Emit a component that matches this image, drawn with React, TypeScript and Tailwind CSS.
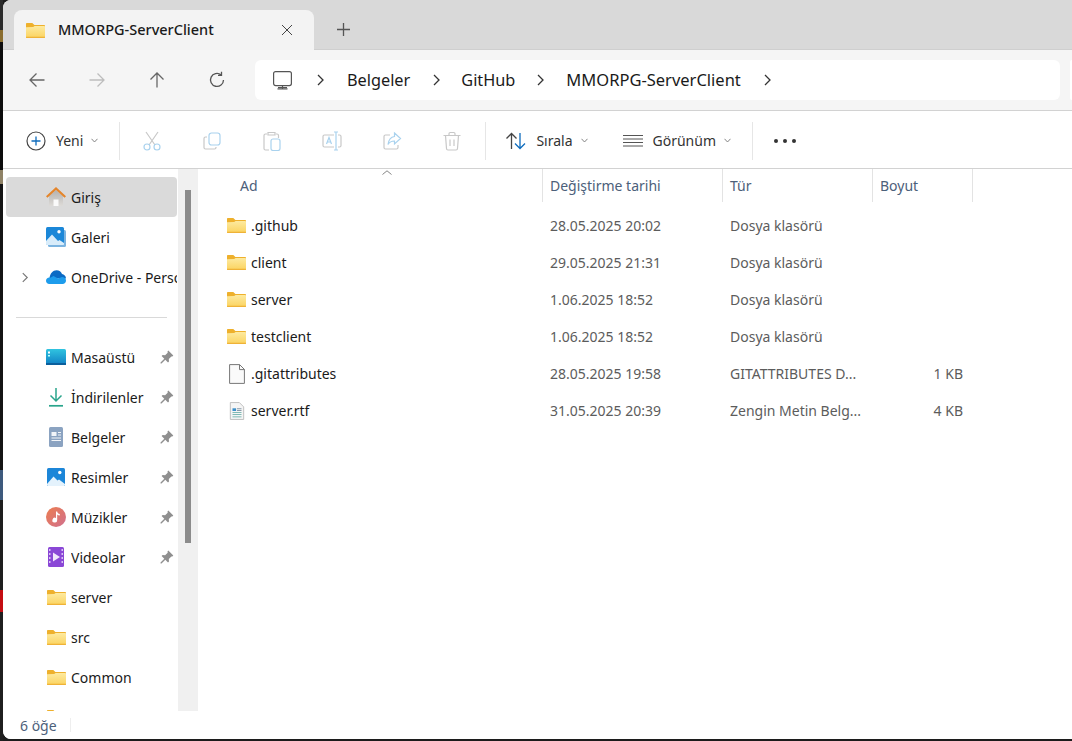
import type { ReactNode } from 'react'

const FONT = 'font-["Noto_Sans","Open_Sans",sans-serif]'

// --- Icons ------------------------------------------------------------------

function FolderIcon({ className = 'w-[19px] h-[15px]' }: { className?: string }) {
  return (
    <svg viewBox="0 0 19 15" className={className}>
      <defs>
        <linearGradient id="folderBody" x1="0" y1="0" x2="0" y2="1">
          <stop offset="0" stopColor="#fdeaa0" />
          <stop offset="1" stopColor="#fbd35f" />
        </linearGradient>
      </defs>
      <path d="M0 1C0 .4.4 0 1 0h4.800c.4 0 .7.1 1 .4L8.400 2H18c.6 0 1 .4 1 1v11c0 .6-.4 1-1 1H1c-.6 0-1-.4-1-1z" fill="#eeb02c" />
      <path d="M0 4.300l7.200-.2L8.600 3H18c.6 0 1 .4 1 1v10c0 .6-.4 1-1 1H1c-.6 0-1-.4-1-1z" fill="url(#folderBody)" />
      <path d="M0 13.800h19v.2c0 .6-.4 1-1 1H1c-.6 0-1-.4-1-1z" fill="#efb237" />
    </svg>
  )
}

function Chevron({ className = 'w-[9px] h-[12px]', color = '#333' }: { className?: string; color?: string }) {
  return (
    <svg viewBox="0 0 9 12" className={className} fill="none" stroke={color} strokeWidth="1.300">
      <path d="M2 1l5 5-5 5" />
    </svg>
  )
}

function SmallDown() {
  return (
    <svg viewBox="0 0 7 5" className="w-[7px] h-[5px]" fill="none" stroke="#777" strokeWidth="0.900">
      <path d="M.5 .8L3.500 4 6.500 .8" />
    </svg>
  )
}

function NavArrow({ d, color }: { d: string; color: string }) {
  return (
    <svg viewBox="0 0 18 18" className="w-[18px] h-[18px]" fill="none" stroke={color} strokeWidth="1.300">
      <path d={d} />
    </svg>
  )
}

function Pin() {
  return (
    <svg viewBox="0 0 14 14" className="w-[14px] h-[14px]" fill="#8f8f8f">
      <path d="M8.300.6l5 5-1 1-.9-.2-2.600 2.600.2 2.500-1 1L5.300 9.800 1.500 13.500.6 13.400l-.1-.8 3.800-3.800-2.700-2.700 1-1 2.500.2L7.700 2.700 7.500 1.600z" />
    </svg>
  )
}

function HomeIcon() {
  return (
    <svg viewBox="0 0 20 20" className="w-[20px] h-[20px]">
      <defs>
        <linearGradient id="homeBody" x1="0" y1="0" x2="0" y2="1">
          <stop offset="0" stopColor="#b4b1ad" />
          <stop offset="1" stopColor="#dddbd8" />
        </linearGradient>
      </defs>
      <path d="M3 9L10 3l7 6v10H3z" fill="url(#homeBody)" />
      <path d="M7.500 19v-6.500h5V19z" fill="#fafafa" />
      <path d="M.7 10L10 1.500 19.300 10" fill="none" stroke="#e4852b" strokeWidth="2.200" />
    </svg>
  )
}

function GalleryIcon() {
  return (
    <svg viewBox="0 0 20 20" className="w-[20px] h-[20px]">
      <rect x="2" y="3" width="18" height="17" rx="1.500" fill="#7cb4e0" />
      <rect width="18" height="18" rx="1.500" fill="#1b87d8" />
      <circle cx="13" cy="4.800" r="1.700" fill="#fff" />
      <path d="M0 14l6-6.500 6 6.500 1.500-1 4.500 3v1.500c0 .3-.2.500-.5.500H.5c-.3 0-.5-.2-.5-.5z" fill="#d8ecfa" />
    </svg>
  )
}

function CloudIcon() {
  return (
    <svg viewBox="0 0 20 14" className="w-[20px] h-[14px]">
      <path d="M3.500 8C4 3.500 7 .2 10.500.2c2.700 0 4.800 1.600 5.500 3.800 2 .2 4 2 4 4.500H3.500z" fill="#0b6ac4" />
      <path d="M3.300 14C1.400 14 0 12.500 0 10.700c0-1.800 1.500-3.200 3.300-3.200.4 0 .8.100 1.200.2l3-1.700 4.500 2.500L16 7c2.200 0 4 1.200 4 3.500 0 2-1.500 3.500-3.400 3.500z" fill="#1d9cec" />
    </svg>
  )
}

function DesktopIcon() {
  return (
    <svg viewBox="0 0 20 16" className="w-[20px] h-[16px]">
      <defs>
        <linearGradient id="desk" x1="0" y1="0" x2="0" y2="1">
          <stop offset="0" stopColor="#30c4e0" />
          <stop offset="1" stopColor="#0f7fc4" />
        </linearGradient>
      </defs>
      <rect width="20" height="16" rx="1.500" fill="url(#desk)" />
      <rect x="2" y="2.500" width="2" height="2" fill="#fff" />
      <rect x="2" y="6" width="2" height="1.500" fill="#bff" />
      <rect y="14" width="20" height="2" fill="#0b5f9c" />
    </svg>
  )
}

function DownloadIcon() {
  return (
    <svg viewBox="0 0 16 20" className="w-[16px] h-[20px]" fill="none" stroke="#2aa58c" strokeWidth="1.500">
      <path d="M8 1v13M2.500 8.500L8 14l5.500-5.500" />
      <path d="M1 18.800h14" strokeWidth="1.700" />
    </svg>
  )
}

function DocsIcon() {
  return (
    <svg viewBox="0 0 14 20" className="w-[14px] h-[20px]">
      <rect width="14" height="20" rx="1.500" fill="#8ba3c1" />
      <path d="M2.500 5h5v4h-5zM9 5h3v1H9zM9 7.500h3v1H9zM2.500 10.500h9.500v1H2.500zM2.500 13h9.500v1H2.500z" fill="#f2f5f9" />
    </svg>
  )
}

function PicturesIcon() {
  return (
    <svg viewBox="0 0 18 18" className="w-[18px] h-[18px]">
      <rect width="18" height="18" rx="1.500" fill="#1c86d8" />
      <circle cx="12.800" cy="4.500" r="1.700" fill="#fff" />
      <path d="M0 16l6.500-7.500 4 4 1.500-1 6 4.500v.5c0 .8-.7 1.500-1.500 1.500h-15C.7 18 0 17.300 0 16.500z" fill="#e4f2fc" />
    </svg>
  )
}

function MusicIcon() {
  return (
    <svg viewBox="0 0 20 20" className="w-[20px] h-[20px]">
      <defs>
        <linearGradient id="mus" x1="0" y1="0" x2="1" y2="1">
          <stop offset="0" stopColor="#ec7d4f" />
          <stop offset="1" stopColor="#d0708f" />
        </linearGradient>
      </defs>
      <circle cx="10" cy="10" r="10" fill="url(#mus)" />
      <path d="M10 4.500h1.200c.2 1.500 1.200 2.300 2.600 2.500v1.400c-1.100 0-2-.4-2.600-1v5.700a2.400 2.400 0 1 1-1.200-2z" fill="#fff" />
    </svg>
  )
}

function VideoIcon() {
  return (
    <svg viewBox="0 0 16 20" className="w-[16px] h-[20px]">
      <rect width="16" height="20" rx="1.500" fill="#8a47d6" />
      <path d="M1 2h1.500v2H1zM1 6h1.500v2H1zM1 10h1.500v2H1zM1 14h1.500v2H1zM13.500 2H15v2h-1.500zM13.500 6H15v2h-1.500zM13.500 10H15v2h-1.500zM13.500 14H15v2h-1.500z" fill="#d9c3f5" />
      <path d="M5 5.500l7 4.500-7 4.500z" fill="#f1e6fc" />
    </svg>
  )
}

// faded toolbar glyphs: grey bodies with a light blue accent
const GREY = '#c8c8c8'
const BLUE = '#a9d2ee'

function ToolGlyph({ children }: { children: ReactNode }) {
  return (
    <div className="flex w-[60px] justify-center">
      <svg viewBox="0 0 20 20" className="w-[20px] h-[20px]" fill="none" strokeWidth="1.200">
        {children}
      </svg>
    </div>
  )
}

// --- Sidebar ----------------------------------------------------------------

function NavItem({
  icon,
  label,
  pinned,
  active,
  expand,
}: {
  icon: ReactNode
  label: string
  pinned?: boolean
  active?: boolean
  expand?: boolean
}) {
  return (
    <div className={`flex h-[40px] w-[171px] shrink-0 items-center rounded-[4px] ml-[3px] ${active ? 'bg-[#dadada]' : ''}`}>
      <div className="flex w-[32px] justify-center pl-[6px]">
        {expand ? <Chevron className="w-[8px] h-[11px]" color="#777" /> : null}
      </div>
      <div className="flex w-[20px] justify-center ml-[8px]">{icon}</div>
      <span className="ml-[5px] overflow-hidden whitespace-nowrap text-[14px] text-[#1a1a1a] flex-1">{label}</span>
      {pinned ? (
        <div className="ml-auto mr-[3px] shrink-0">
          <Pin />
        </div>
      ) : null}
    </div>
  )
}

const fileRows = [
  { name: '.github', date: '28.05.2025 20:02', type: 'Dosya klasörü', size: '', kind: 'folder' },
  { name: 'client', date: '29.05.2025 21:31', type: 'Dosya klasörü', size: '', kind: 'folder' },
  { name: 'server', date: '1.06.2025 18:52', type: 'Dosya klasörü', size: '', kind: 'folder' },
  { name: 'testclient', date: '1.06.2025 18:52', type: 'Dosya klasörü', size: '', kind: 'folder' },
  { name: '.gitattributes', date: '28.05.2025 19:58', type: 'GITATTRIBUTES D...', size: '1 KB', kind: 'file' },
  { name: 'server.rtf', date: '31.05.2025 20:39', type: 'Zengin Metin Belg...', size: '4 KB', kind: 'rtf' },
]

function FileIcon({ kind }: { kind: string }) {
  if (kind === 'folder') return <FolderIcon />
  if (kind === 'file') {
    return (
      <svg viewBox="0 0 16 20" className="w-[16px] h-[20px]">
        <path d="M.6.6h10l4.800 4.800v14H.6z" fill="#fafafa" stroke="#777" strokeWidth="1" />
        <path d="M10.500.6v5h5" fill="none" stroke="#777" strokeWidth="1" />
      </svg>
    )
  }
  return (
    <svg viewBox="0 0 16 20" className="w-[16px] h-[18px]">
      <path d="M.6.6h10l4.800 4.800v14H.6z" fill="#f5f5f5" stroke="#bbb" strokeWidth="1" />
      <path d="M3 7h4v3H3z" fill="#3b8fc9" />
      <path d="M3 11h10v1H3zM3 13.500h10v1H3zM3 16h10v1H3z" fill="#5aa7a0" />
      <path d="M8 7h5v1H8zM8 9h5v1H8z" fill="#8a9aa8" />
    </svg>
  )
}

// Sliver of whatever sits behind the window, visible along its left edge.
function BackdropStrip() {
  return (
    <div className="flex w-[3px] shrink-0 flex-col">
      <div className="h-[30px] bg-[#2a2a2a]" />
      <div className="h-[12px] bg-[#8a6d2f]" />
      <div className="h-[128px] bg-[#0c0c0c]" />
      <div className="h-[14px] bg-[#8f8266]" />
      <div className="h-[286px] bg-[#141414]" />
      <div className="h-[30px] bg-[#3e5a7d]" />
      <div className="h-[90px] bg-[#1e1e1e]" />
      <div className="h-[22px] bg-[#c40d12]" />
      <div className="flex-1 bg-[#1f1f1f]" />
    </div>
  )
}

export default function App() {
  return (
    <div className={`${FONT} flex h-[741px] w-[1072px] overflow-hidden bg-[#1c1c1c]`}>
      <BackdropStrip />
      <div className="mb-[2px] flex min-w-0 flex-1 flex-col overflow-hidden rounded-tl-[8px] rounded-bl-[8px] bg-white">
        {/* tab strip */}
        <div className="flex h-[50px] shrink-0 items-end bg-[#d9d9d9] border-b border-[#cfcfcf] pl-[11px]">
          <div className="flex h-[40px] w-[300px] items-center rounded-t-[8px] bg-[#f3f3f3] pl-[12px] mb-[-1px]">
            <FolderIcon className="w-[19px] h-[15px]" />
            <span className="ml-[13px] text-[14.500px] font-medium text-[#1a1a1a]">MMORPG-ServerClient</span>
            <svg viewBox="0 0 12 12" className="ml-auto mr-[21px] w-[12px] h-[12px]" fill="none" stroke="#444" strokeWidth="1">
              <path d="M1 1l10 10M11 1L1 11" />
            </svg>
          </div>
          <div className="ml-[23px] flex h-[40px] items-center">
            <svg viewBox="0 0 12 12" className="w-[13px] h-[13px]" fill="none" stroke="#555" strokeWidth="1.200">
              <path d="M6 0v12M0 6h12" />
            </svg>
          </div>
        </div>

        {/* address row */}
        <div className="flex h-[61px] shrink-0 items-center bg-[#f5f5f5] border-b border-[#d2d2d2] pl-[4px]">
          <div className="flex w-[60px] justify-center">
            <NavArrow d="M16.500 9H2M8.500 2.500L2 9l6.500 6.500" color="#666" />
          </div>
          <div className="flex w-[60px] justify-center">
            <NavArrow d="M1.500 9H16M9.500 2.500L16 9l-6.500 6.500" color="#bdbdbd" />
          </div>
          <div className="flex w-[60px] justify-center">
            <NavArrow d="M9 16.500V2M2.500 8.500L9 2l6.500 6.500" color="#666" />
          </div>
          <div className="flex w-[60px] justify-center">
            <NavArrow d="M15.500 9A6.500 6.500 0 1 1 13 3.800M13.500 .8v3.500H10" color="#555" />
          </div>
          <div className="ml-[8px] flex h-[40px] w-[805px] items-center rounded-[6px] bg-white pl-[18px]">
            <svg viewBox="0 0 19 19" className="w-[19px] h-[19px]" fill="none" stroke="#555" strokeWidth="1.200">
              <rect x=".6" y=".6" width="17.800" height="14" rx="2" />
              <path d="M9.500 14.600v3M4.500 17.800h10M5 16.500h9" />
            </svg>
            <Chevron className="ml-[24px] w-[9px] h-[12px]" />
            <span className="ml-[22px] text-[16.300px] text-[#1a1a1a]">Belgeler</span>
            <Chevron className="ml-[22px] w-[9px] h-[12px]" />
            <span className="ml-[20px] text-[16.300px] text-[#1a1a1a]">GitHub</span>
            <Chevron className="ml-[21px] w-[9px] h-[12px]" />
            <span className="ml-[21px] text-[16.500px] text-[#1a1a1a]">MMORPG-ServerClient</span>
            <Chevron className="ml-[22px] w-[9px] h-[12px]" />
          </div>
          <div className="ml-[10px] h-[40px] flex-1 rounded-l-[6px] bg-white" />
        </div>

        {/* command bar */}
        <div className="flex h-[58px] shrink-0 items-center border-b border-[#d2d2d2] bg-white pt-[2px] text-[14px] text-[#333]">
          <svg viewBox="0 0 20 20" className="ml-[23px] w-[20px] h-[20px]" fill="none">
            <circle cx="10" cy="10" r="9" stroke="#444" strokeWidth="1.200" />
            <path d="M10 5.500v9M5.500 10h9" stroke="#0f6cbd" strokeWidth="1.300" />
          </svg>
          <span className="ml-[10px]">Yeni</span>
          <div className="ml-[8px]">
            <SmallDown />
          </div>
          <div className="ml-[21px] h-[38px] w-px bg-[#e6e6e6]" />
          <div className="ml-[2px] flex">
            <ToolGlyph>
              <path d="M4 1l9 13M16 1L7 14" stroke={GREY} />
              <circle cx="5" cy="16" r="3" stroke={BLUE} />
              <circle cx="15" cy="16" r="3" stroke={BLUE} />
            </ToolGlyph>
            <ToolGlyph>
              <path d="M5 6H3.500C2.500 6 2 6.700 2 7.500v9c0 1 .7 1.500 1.500 1.500h9c1 0 1.500-.6 1.500-1.500V16" stroke={GREY} />
              <rect x="7" y="2" width="11" height="12" rx="2.500" stroke={BLUE} />
            </ToolGlyph>
            <ToolGlyph>
              <path d="M5 3H3.500C2.600 3 2 3.700 2 4.500v13c0 .9.600 1.500 1.500 1.500H7M14 3h1c.9 0 1.500.6 1.500 1.500V7M6 1.500h7V4H6z" stroke={GREY} />
              <rect x="9" y="8" width="9" height="11.500" rx="2" stroke={BLUE} />
            </ToolGlyph>
            <ToolGlyph>
              <path d="M12 4H2.500C1.500 4 1 4.700 1 5.500v9c0 1 .7 1.500 1.500 1.500H12M16 4h1.500c1 0 1.500.7 1.500 1.500v9c0 1-.7 1.500-1.500 1.500H16" stroke={GREY} />
              <path d="M14 1v18M12 1h4M12 19h4M4.500 13l2.500-6.500L9.500 13M5.500 11h3" stroke={BLUE} />
            </ToolGlyph>
            <ToolGlyph>
              <path d="M8 4H3.500C2.500 4 2 4.700 2 5.500v11c0 1 .7 1.500 1.500 1.500h11c1 0 1.500-.6 1.500-1.500V14" stroke={GREY} />
              <path d="M12.500 2l6 5.500-6 5.500V10c-3 0-5 1-6.500 3.500C6.500 9.500 9 6 12.500 5.500z" stroke={BLUE} />
            </ToolGlyph>
            <ToolGlyph>
              <path d="M1.500 4.500h17M7 4.500V2.800C7 2 7.500 1.500 8.200 1.500h3.600c.7 0 1.200.5 1.200 1.300v1.700M3.500 4.500l1 13c0 1 .7 1.500 1.500 1.500h8c.8 0 1.500-.5 1.500-1.500l1-13M8 8.500v6.500M12 8.500v6.500" stroke={GREY} />
            </ToolGlyph>
          </div>
          <div className="ml-[3px] h-[38px] w-px bg-[#e6e6e6]" />
          <svg viewBox="0 0 20 18" className="ml-[20px] w-[20px] h-[18px]" fill="none" strokeWidth="1.300">
            <path d="M5.500 17V1.500M.5 6.500l5-5 5 5" stroke="#444" />
            <path d="M14 1v15.500M9 11.500l5 5 5-5" stroke="#0f6cbd" />
          </svg>
          <span className="ml-[10px]">Sırala</span>
          <div className="ml-[8px]">
            <SmallDown />
          </div>
          <svg viewBox="0 0 20 14" className="ml-[35px] w-[20px] h-[14px]" fill="none" stroke="#555" strokeWidth="1">
            <path d="M0 1.500h20M0 5h20M0 8.500h20M0 12h20" />
          </svg>
          <span className="ml-[10px]">Görünüm</span>
          <div className="ml-[8px]">
            <SmallDown />
          </div>
          <div className="ml-[21px] h-[38px] w-px bg-[#e6e6e6]" />
          <div className="ml-[21px] flex gap-[5px]">
            <span className="h-[4px] w-[4px] rounded-full bg-[#333]" />
            <span className="h-[4px] w-[4px] rounded-full bg-[#333]" />
            <span className="h-[4px] w-[4px] rounded-full bg-[#333]" />
          </div>
        </div>

        {/* body */}
        <div className="flex min-h-0 flex-1">
          <div className="flex w-[175px] shrink-0 flex-col overflow-hidden pt-[8px]">
            <NavItem icon={<HomeIcon />} label="Giriş" active />
            <NavItem icon={<GalleryIcon />} label="Galeri" />
            <NavItem icon={<CloudIcon />} label="OneDrive - Personal" expand />
            <div className="ml-[13px] mt-[20px] mb-[19px] h-px w-[151px] shrink-0 bg-[#d9d9d9]" />
            <NavItem icon={<DesktopIcon />} label="Masaüstü" pinned />
            <NavItem icon={<DownloadIcon />} label="İndirilenler" pinned />
            <NavItem icon={<DocsIcon />} label="Belgeler" pinned />
            <NavItem icon={<PicturesIcon />} label="Resimler" pinned />
            <NavItem icon={<MusicIcon />} label="Müzikler" pinned />
            <NavItem icon={<VideoIcon />} label="Videolar" pinned />
            <NavItem icon={<FolderIcon />} label="server" />
            <NavItem icon={<FolderIcon />} label="src" />
            <NavItem icon={<FolderIcon />} label="Common" />
            <NavItem icon={<FolderIcon />} label="" />
          </div>
          <div className="w-[20px] shrink-0 bg-[#f0f0f0] pt-[21px] pl-[7px]">
            <div className="h-[353px] w-[6px] bg-[#8b8b8b]" />
          </div>

          <div className="relative min-w-0 flex-1 bg-white">
            <svg viewBox="0 0 10 5" className="absolute left-[184px] top-[1px] w-[10px] h-[5px]" fill="none" stroke="#777" strokeWidth="0.900">
              <path d="M.5 4.500L5 .8l4.500 3.700" />
            </svg>
            <div className="flex h-[33px] items-center text-[14px] text-[#4c607a]">
              <span className="w-[344px] pl-[42px]">Ad</span>
              <span className="h-full w-[180px] border-l border-[#e3e3e3] pl-[7px] leading-[33px]">Değiştirme tarihi</span>
              <span className="h-full w-[150px] border-l border-[#e3e3e3] pl-[7px] leading-[33px]">Tür</span>
              <span className="h-full w-[101px] border-x border-[#e3e3e3] pl-[7px] leading-[33px]">Boyut</span>
            </div>
            <div className="pt-[5px]">
              {fileRows.map((f) => (
                <div key={f.name} className="flex h-[37px] items-center text-[14px]">
                  <div className="flex w-[344px] items-center">
                    <div className="flex w-[19px] justify-center ml-[29px]">
                      <FileIcon kind={f.kind} />
                    </div>
                    <span className="ml-[5px] text-[#1a1a1a]">{f.name}</span>
                  </div>
                  <span className="w-[180px] pl-[8px] text-[#5c5c5c]">{f.date}</span>
                  <span className="w-[150px] pl-[8px] text-[#5c5c5c]">{f.type}</span>
                  <span className="w-[91px] text-right text-[#5c5c5c]">{f.size}</span>
                </div>
              ))}
            </div>
          </div>
        </div>

        {/* status bar */}
        <div className="flex h-[28px] shrink-0 items-center bg-white pl-[17px] text-[14px] text-[#4c607a]">
          <span>6 öğe</span>
          <div className="ml-[13px] h-[14px] w-px bg-[#eeeeee]" />
        </div>
      </div>
    </div>
  )
}
